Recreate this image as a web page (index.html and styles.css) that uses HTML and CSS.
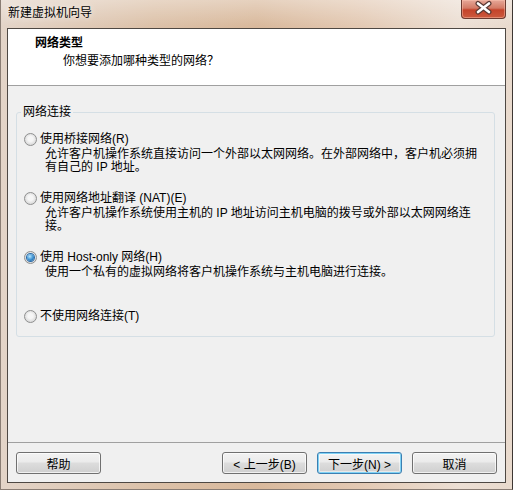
FILE: index.html
```html
<!DOCTYPE html>
<html>
<head>
	<meta charset="UTF-8">
	<title>新建虚拟机向导</title>
	<link rel="stylesheet" href="styles.css">
</head>
<body>
	<div class="window">
		<div class="titlebar">
			<span class="title">新建虚拟机向导</span>
			<span class="close">
				<svg width="45" height="18" viewBox="0 0 45 18">
					<path d="M17 4.5 L28 13 M28 4.5 L17 13" stroke="#5a3a34" stroke-width="5" stroke-linecap="round"/>
					<path d="M17 4.5 L28 13 M28 4.5 L17 13" stroke="#ffffff" stroke-width="2.6" stroke-linecap="round"/>
				</svg>
			</span>
		</div>
		<div class="client">
			<div class="header">
				<div class="header-title">网络类型</div>
				<div class="header-sub">你想要添加哪种类型的网络？</div>
			</div>
			<div class="content">
				<div class="group">
					<div class="group-title">网络连接</div>
					<div class="option">
						<div class="option-label"><span class="radio"></span>使用桥接网络(R)</div>
						<div class="option-desc">允许客户机操作系统直接访问一个外部以太网网络。在外部网络中，客户机必须拥<br>有自己的 IP 地址。</div>
					</div>
					<div class="option">
						<div class="option-label"><span class="radio"></span>使用网络地址翻译 (NAT)(E)</div>
						<div class="option-desc">允许客户机操作系统使用主机的 IP 地址访问主机电脑的拨号或外部以太网网络连<br>接。</div>
					</div>
					<div class="option">
						<div class="option-label"><span class="radio checked"></span>使用 Host-only 网络(H)</div>
						<div class="option-desc">使用一个私有的虚拟网络将客户机操作系统与主机电脑进行连接。</div>
					</div>
					<div class="option">
						<div class="option-label"><span class="radio"></span>不使用网络连接(T)</div>
					</div>
				</div>
			</div>
			<div class="footer">
				<button class="btn">帮助</button>
				<span class="spacer"></span>
				<button class="btn">&lt; 上一步(B)</button>
				<button class="btn default">下一步(N) &gt;</button>
				<button class="btn">取消</button>
			</div>
		</div>
	</div>
</body>
</html>
```

FILE: styles.css
```css
* {
	box-sizing: border-box;
}
body {
	margin: 0;
	padding: 0;
	font-family: 'Liberation Sans', 'Noto Sans CJK SC', sans-serif;
	font-size: 12px;
	color: #000;
}
.window {
	width: 513px;
	height: 490px;
	display: flex;
	flex-direction: column;
	padding: 0 6px 6px;
	border: 1px solid #8a7d74;
	border-top: none;
	border-right-color: #3e3733;
	background:
		linear-gradient(to bottom, rgba(255, 255, 255, .35), rgba(255, 255, 255, 0) 26px),
		linear-gradient(to right, #e3d4c8, #dcc1a8 30%, #d9b99c 50%, #e3c9b3 70%, #ecdfd4 90%, #e9dacd);
}
.titlebar {
	height: 28px;
	display: flex;
	align-items: flex-start;
}
.title {
	padding: 6px 0 0 1px;
	line-height: 15px;
	text-shadow: 0 0 6px rgba(255, 255, 255, .9);
}
.close {
	margin-left: auto;
	width: 45px;
	height: 19px;
	border: 1px solid #6b3a30;
	border-top: none;
	border-radius: 0 0 4px 4px;
	background: linear-gradient(to bottom, #e6a898, #d37a65 45%, #c4432a 55%, #cc5a3e);
	box-shadow: inset 0 0 0 1px rgba(255, 200, 180, .45);
}
.close svg {
	display: block;
	margin: -1px 0 0 -1px;
}
.client {
	flex: 1;
	display: flex;
	flex-direction: column;
	border: 1px solid #4e4843;
	background: #f0f0f0;
}
.header {
	height: 57px;
	padding: 7px 0 0;
	background: #fff;
	border-bottom: 1px solid #a0a0a0;
	line-height: 15px;
}
.header-title {
	padding-left: 27px;
	font-weight: bold;
}
.header-sub {
	margin-top: 3px;
	padding-left: 55px;
}
.content {
	flex: 1;
	padding: 26px 10px 0 8px;
}
.group {
	height: 225px;
	border: 1px solid #d5dfe5;
	border-radius: 3px;
	line-height: 15px;
}
.group-title {
	width: fit-content;
	margin: -8px 0 12px 4px;
	padding: 0 2px;
	background: #f0f0f0;
}
.option {
	height: 59px;
}
.option-label {
	display: flex;
	align-items: center;
	padding-left: 7px;
}
.radio {
	position: relative;
	width: 13px;
	height: 13px;
	margin-right: 3px;
	border: 1px solid #8e8f8f;
	border-radius: 50%;
	background: radial-gradient(circle at 50% 45%, #f6f6f6 30%, #dcdcdc 70%, #cfcfcf);
}
.radio.checked::after {
	content: '';
	position: absolute;
	left: 2px;
	top: 2px;
	width: 7px;
	height: 7px;
	border-radius: 50%;
	background: radial-gradient(circle at 40% 35%, #b6e6ff, #3a8fd0 55%, #15508a);
	box-shadow: 0 0 0 1px #2a6aa6;
}
.option-desc {
	padding: 1px 0 0 28px;
	line-height: 13px;
}
.footer {
	display: flex;
	gap: 10px;
	padding: 9px 8px 8px;
	border-top: 1px solid #a0a0a0;
}
.spacer {
	flex: 1;
}
.btn {
	width: 85px;
	height: 22px;
	padding: 0;
	border: 1px solid #707070;
	border-radius: 3px;
	font-family: 'Liberation Sans', 'Noto Sans CJK SC', sans-serif;
	font-size: 12px;
	color: #000;
	background: linear-gradient(to bottom, #f2f2f2, #ebebeb 45%, #dddddd 50%, #cfcfcf);
	box-shadow: inset 0 0 0 1px rgba(255, 255, 255, .7);
}
.btn.default {
	border-color: #3c7fb1;
	box-shadow: inset 0 0 0 1px #7fd2f5, inset 0 0 0 2px rgba(255, 255, 255, .5);
}
```
